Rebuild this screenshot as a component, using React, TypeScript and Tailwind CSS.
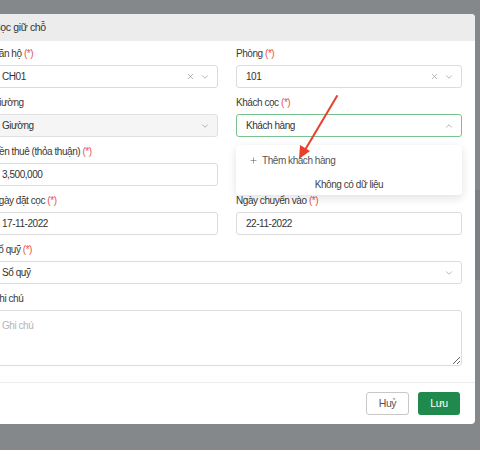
import React from 'react';
import { X, ChevronDown, ChevronUp, Plus } from 'lucide-react';

const font = { fontFamily: '"Liberation Sans", Arial, sans-serif' };

function Label({ text, required }: { text: string; required?: boolean }) {
    return (
        <div className="h-[16px] mb-[3px] text-[10px] tracking-[-0.45px] leading-[16px] text-[#3a3a3a] whitespace-nowrap">
            {text} {required && <span className="text-[#e5534b]">(*)</span>}
        </div>
    );
}

function Field({ children, className = '' }: { children: React.ReactNode; className?: string }) {
    return <div className={`mb-[7px] ${className}`}>{children}</div>;
}

function Input({ value, clear, chevron, disabled, focused, up }: {
    value: string; clear?: boolean; chevron?: boolean; disabled?: boolean; focused?: boolean; up?: boolean;
}) {
    const tone = focused
        ? 'bg-white border-[#78c28e]'
        : disabled
            ? 'bg-[#f5f5f5] border-[#e0e0e0]'
            : 'bg-white border-[#dcdcdc]';
    return (
        <div className={`h-[23px] flex items-center pl-[9px] pr-[7px] rounded-[3px] border text-[10px] tracking-[-0.45px] text-[#333] ${tone}`}>
            <span className="flex-1 truncate">{value}</span>
            {clear && <X size={9} strokeWidth={1.6} className="text-[#888] mr-[5px]" />}
            {chevron && (up
                ? <ChevronUp size={10} strokeWidth={1.5} className="text-[#888]" />
                : <ChevronDown size={10} strokeWidth={1.5} className="text-[#888]" />)}
        </div>
    );
}

export default function App() {
    return (
        <div className="relative w-[480px] h-[450px] overflow-hidden bg-[#85888b] pt-[14px]" style={font}>
            {/* underlying page peeking out on the right */}
            <div className="absolute right-0 top-[190px] w-[5px] h-[90px] bg-[#7d8083]" />

            {/* ── Modal ───────────────────────────────────── */}
            <div className="relative ml-[-21px] w-[496px] bg-white rounded-[4px] overflow-hidden">
                <div className="h-[27px] bg-[#ececec] px-[14px] flex items-center text-[10.5px] tracking-[-0.35px] text-[#333]">
                    Cọc giữ chỗ
                </div>

                <div className="px-[13px] pt-[5px]">
                    <div className="grid grid-cols-2 gap-x-[18px]">
                        <Field>
                            <Label text="Căn hộ" required />
                            <Input value="CH01" clear chevron />
                        </Field>
                        <Field>
                            <Label text="Phòng" required />
                            <Input value="101" clear chevron />
                        </Field>
                        <Field>
                            <Label text="Giường" />
                            <Input value="Giường" chevron disabled />
                        </Field>
                        <Field className="relative">
                            <Label text="Khách cọc" required />
                            <Input value="Khách hàng" chevron focused up />

                            {/* dropdown */}
                            <div className="absolute left-0 right-0 top-[50px] z-10 h-[50px] bg-white rounded-[4px] shadow-[0_3px_10px_rgba(0,0,0,0.12)] text-[10px] tracking-[-0.45px]">
                                <div className="h-[29px] flex items-center pl-[13px] pt-[1px] text-[#555]">
                                    <Plus size={9} strokeWidth={1.4} className="mr-[4px]" />
                                    Thêm khách hàng
                                </div>
                                <div className="h-[20px] flex items-center justify-center text-[#444]">
                                    Không có dữ liệu
                                </div>
                            </div>
                        </Field>
                        <Field>
                            <Label text="Tiền thuê (thỏa thuận)" required />
                            <Input value="3,500,000" />
                        </Field>
                        <div />
                        <Field>
                            <Label text="Ngày đặt cọc" required />
                            <Input value="17-11-2022" />
                        </Field>
                        <Field>
                            <Label text="Ngày chuyển vào" required />
                            <Input value="22-11-2022" />
                        </Field>
                    </div>

                    <Field>
                        <Label text="Sổ quỹ" required />
                        <Input value="Sổ quỹ" chevron />
                    </Field>

                    <div className="mb-[16px]">
                        <Label text="Ghi chú" />
                        <textarea
                            placeholder="Ghi chú"
                            className="block w-full h-[56px] rounded-[3px] border border-[#dcdcdc] px-[9px] py-[7px] text-[10px] tracking-[-0.45px] text-[#333] placeholder:text-[#b5b5b5] outline-none"
                            style={font}
                        />
                    </div>
                </div>

                <div className="border-t border-[#ececec] h-[42px] flex items-start justify-end gap-[9px] pt-[9px] pr-[15px]">
                    <button className="w-[43px] h-[23px] rounded-[3px] border border-[#c8c8c8] bg-white text-[10.5px] tracking-[-0.4px] text-[#555]">Huỷ</button>
                    <button className="w-[42px] h-[23px] rounded-[3px] bg-[#1f8a4c] text-[10.5px] tracking-[-0.4px] text-white">Lưu</button>
                </div>
            </div>

            {/* annotation arrow */}
            <svg className="absolute left-0 top-0 z-20 pointer-events-none" width="480" height="450">
                <line x1="337" y1="96" x2="305" y2="150" stroke="#e8402a" strokeWidth="2" strokeLinecap="round" />
                <polygon points="299,159 300,145 310,151" fill="#e8402a" />
            </svg>
        </div>
    );
}
